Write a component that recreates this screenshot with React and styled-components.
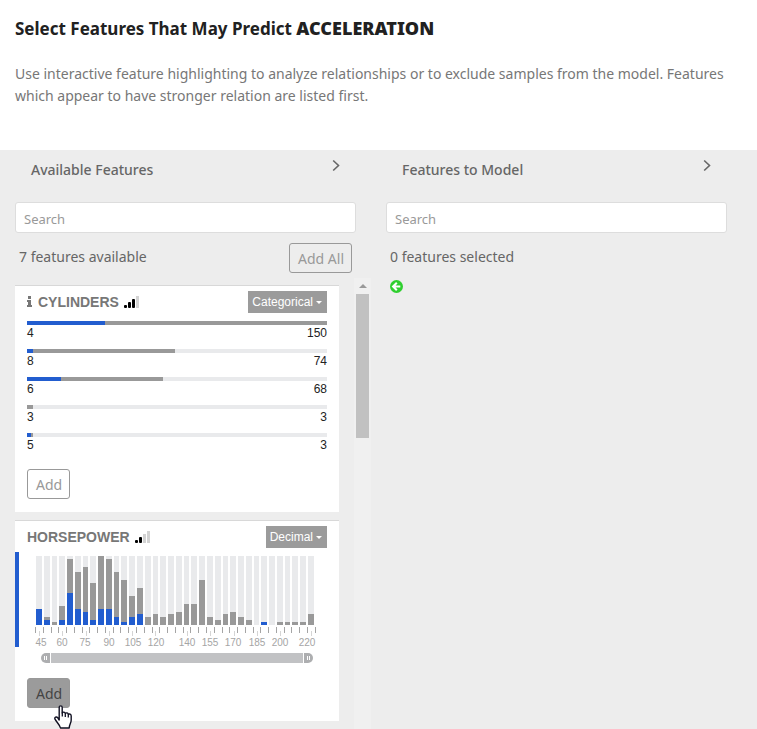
import React, { useState } from "react";
import styled, { createGlobalStyle, css } from "styled-components";

const GlobalStyle = createGlobalStyle`
  * { box-sizing: border-box; }
  html, body, #root { height: 100%; }
  body { margin: 0; background: #fff; color: #666; font-family: "Noto Sans", "Open Sans", sans-serif; overflow: hidden; }
`;

const Page = styled.div`
  display: flex;
  flex-direction: column;
  height: 100vh;
`;

const Intro = styled.header`
  padding: 16px 15px 0;
  height: 150px;
  flex: none;
`;

const Title = styled.h1`
  margin: 0;
  font-size: 17px;
  line-height: 24px;
  font-weight: 700;
  color: #212121;
  strong { font-size: 18px; font-weight: 900; }
`;

const Lead = styled.p`
  margin: 22px 0 0;
  font-size: 14px;
  line-height: 22px;
  font-weight: 400;
  color: #777;
`;

const Columns = styled.main`
  flex: 1;
  min-height: 0;
  display: grid;
  grid-template-columns: 1fr 1fr;
  padding-right: 15px;
  background: #ededed;
`;

const Column = styled.section`
  display: flex;
  flex-direction: column;
  min-width: 0;
  min-height: 0;
  padding-left: 15px;
`;

const ColumnHead = styled.div`
  display: flex;
  justify-content: space-between;
  align-items: flex-start;
  height: 52px;
  padding: 8px 31px 0 16px;
`;

const ColumnTitle = styled.h2`
  margin: 0;
  font-size: 14px;
  line-height: 24px;
  font-weight: 500;
  color: #666;
`;

const Collapse = styled.button`
  display: flex;
  padding: 1px 0;
  border: 0;
  background: none;
`;

const Search = styled.input`
  margin-right: 15px;
  height: 31px;
  padding: 3px 8px 0;
  border: 1px solid #ddd;
  border-radius: 3px;
  background: #fff;
  font: 400 13px "Noto Sans", sans-serif;
  &::placeholder { color: #999; opacity: 1; }
`;

const Summary = styled.div`
  display: flex;
  justify-content: space-between;
  align-items: flex-start;
  height: 45px;
  padding: 10px 19px 0 4px;
  font-size: 14px;
  line-height: 28px;
`;

const Button = styled.button`
  height: 30px;
  padding: 2px 7px 0 8px;
  border: 1px solid #999;
  border-radius: 3px;
  background: ${(p) => (p.$active ? "#9b9b9b" : "transparent")};
  color: ${(p) => (p.$active ? "#444" : "#999")};
  font: 400 14px/24px "Noto Sans", sans-serif;
`;

const ScrollArea = styled.div`
  flex: 1;
  min-height: 0;
  display: flex;
  overflow: hidden;
`;

const Cards = styled.div`
  flex: 1;
  min-width: 0;
  display: flex;
  flex-direction: column;
  gap: 8px;
  padding: 7px 15px 8px 0;
`;

const Scrollbar = styled.div`
  width: 17px;
  padding: 0 2px;
  background: #f0f0f0;
`;

const ScrollUp = styled.div`
  height: 16px;
  display: flex;
  align-items: center;
  justify-content: center;
  &::after {
    content: "";
    border: 4px solid transparent;
    border-top: 0;
    border-bottom-color: #999;
  }
`;

const ScrollThumb = styled.div`
  height: 144px;
  background: #c1c1c1;
`;

const Card = styled.article`
  flex: none;
  padding: 5px 12px 13px;
  border-top: 1px solid #d8d8d8;
  background: #fff;
  font-family: "Liberation Sans", Arial, sans-serif;
`;

const CardHead = styled.div`
  display: flex;
  align-items: center;
  height: 22px;
  gap: 5px;
`;

const FeatureName = styled.h3`
  margin: 0;
  font-size: 14px;
  line-height: 22px;
  font-weight: 700;
  color: #777;
`;

const TypePicker = styled.span`
  position: relative;
  margin-left: auto;
  &::after {
    content: "";
    position: absolute;
    right: 5px;
    top: 10px;
    border: 3px solid transparent;
    border-bottom: 0;
    border-top-color: #fff;
    pointer-events: none;
  }
`;

const TypeSelect = styled.select`
  display: block;
  appearance: none;
  height: 22px;
  padding: 0 14px 0 4px;
  border: 0;
  border-radius: 0;
  background: #9b9b9b;
  color: #fff;
  field-sizing: content;
  font: 400 12px "Liberation Sans", Arial, sans-serif;
`;

const Categories = styled.ul`
  list-style: none;
  margin: 8px 0;
  padding: 0;
`;

const Category = styled.li`
  height: 28px;
  color: #222;
  font-size: 12px;
  line-height: 16px;
`;

const CategoryBar = styled.div`
  display: flex;
  height: 4px;
  background: #e9eaec;
`;

const Portion = styled.span`
  background: ${(p) => (p.$selected ? "#225dcf" : "#999")};
`;

const CategoryText = styled.div`
  display: flex;
  justify-content: space-between;
`;

const Histogram = styled.div`
  margin: 4px -12px 6px;
  padding: 4px 12px 0 8px;
  border-left: 4px solid #225dcf;
  svg { display: block; width: 100%; height: auto; }
  text { font: 400 10px "Liberation Sans", Arial, sans-serif; fill: #a5a5a5; text-anchor: middle; }
`;

const Range = styled.div`
  position: relative;
  height: 10px;
  margin: 0 14px 15px;
  background: linear-gradient(#c1c2c4, #c1c2c4) center / calc(100% - 20px) 100% no-repeat;
`;

const thumb = css`
  appearance: none;
  width: 9px;
  height: 10px;
  border: 0;
  pointer-events: auto;
  background:
    linear-gradient(#fff, #fff) 3px 3px / 1px 4px no-repeat,
    linear-gradient(#fff, #fff) 5px 3px / 1px 4px no-repeat,
    #adaeb0;
  border-radius: ${(p) => (p.$end ? "0 5px 5px 0" : "5px 0 0 5px")};
`;

const RangeInput = styled.input`
  position: absolute;
  inset: 0;
  width: 100%;
  height: 10px;
  margin: 0;
  appearance: none;
  background: none;
  pointer-events: none;
  &::-webkit-slider-thumb { ${thumb} }
`;

const Action = styled.div`
  position: relative;
  display: flex;
`;

const Pointer = styled.svg`
  position: absolute;
  left: 27px;
  top: 27px;
`;

const MoveBack = styled.button`
  align-self: flex-start;
  display: flex;
  margin: 2px 0 0 4px;
  padding: 0;
  border: 0;
  background: none;
`;

const TOTALS = [16, 8, 3, 19, 66, 53, 58, 42, 69, 66, 53, 45, 29, 37, 8, 11, 8, 11, 13, 21, 21, 45, 8, 5, 11, 13, 8, 5, 0, 3, 0, 3, 3, 3, 3, 11];
const SELECTED = { 0: 16, 1: 5, 3: 5, 4: 32, 5: 16, 6: 13, 7: 5, 8: 16, 9: 16, 10: 8, 11: 3, 12: 8, 13: 11, 29: 3 };
const LABELS = [[45, 14, 12], [60, 35, 35], [75, 58, 59], [90, 82, 82], [105, 106, 105], [120, 129, 128], [140, 160, 160], [155, 183, 183], [170, 206, 207], [185, 230, 230], [200, 253, 253], [220, 280, 284]];
const CATEGORIES = [
  { name: 4, count: 150, total: 300, selected: 78 },
  { name: 8, count: 74, total: 148, selected: 6 },
  { name: 6, count: 68, total: 136, selected: 34 },
  { name: 3, count: 3, total: 6, selected: 0 },
  { name: 5, count: 3, total: 6, selected: 4 },
];
const binX = (i) => Math.round((i * 272) / 35) + 9;

function Signal({ level }) {
  const bars = [[0, 9, 3, 3], [4, 6, 3, 6], [8, 3, 3, 9], [12, 0, 3, 12]];
  return (
    <svg width="15" height="12" viewBox="0 0 15 12" aria-hidden="true">
      {bars.map(([x, y, w, h], i) => (
        <rect key={x} x={x} y={y} width={w} height={h} rx={i < level ? 1 : 0} fill={i < level ? "#000" : "#d3d3d3"} />
      ))}
    </svg>
  );
}

function InfoIcon() {
  return (
    <svg width="6" height="12" viewBox="0 0 6 12" aria-hidden="true" fill="#777">
      <path d="M1 0h3v3H1zM0 4h4v5h1v2H0V9h1V6H0z" />
    </svg>
  );
}

function Chevron() {
  return (
    <svg width="8" height="13" viewBox="0 0 8 13" fill="none" stroke="#666" strokeWidth="1.6" aria-hidden="true">
      <path d="M1.2 1.5L6.5 6.5L1.2 11.5" />
    </svg>
  );
}

function FeatureType({ value, options }) {
  return (
    <TypePicker>
      <TypeSelect aria-label="Feature type" defaultValue={value}>
        {options.map((o) => <option key={o}>{o}</option>)}
      </TypeSelect>
    </TypePicker>
  );
}

function HorsepowerChart() {
  return (
    <svg viewBox="0 0 300 91" role="img" aria-label="Horsepower distribution" shapeRendering="crispEdges">
      {TOTALS.map((total, i) => {
        const x = binX(i);
        const w = binX(i + 1) - x - 2;
        const chosen = SELECTED[i] || 0;
        return (
          <g key={i}>
            <rect x={x} y="0" width={w} height="69" fill="#e9eaec" />
            <rect x={x} y={69 - total} width={w} height={total} fill="#999" />
            <rect x={x} y={69 - chosen} width={w} height={chosen} fill="#225dcf" />
          </g>
        );
      })}
      {Array.from({ length: 37 }, (_, i) => (
        <rect key={i} x={binX(i) - 1} y="71" width="1" height="6" fill="#a5a5a5" />
      ))}
      {LABELS.map(([label, x, tick]) => (
        <g key={label}>
          <rect x={tick} y="75" width="1" height="5" fill="#d5d5d5" />
          <text x={x} y="90">{label}</text>
        </g>
      ))}
    </svg>
  );
}

function SearchColumn({ title, summary, children }) {
  return (
    <Column>
      <ColumnHead>
        <ColumnTitle>{title}</ColumnTitle>
        <Collapse type="button" aria-label={`Collapse ${title}`}><Chevron /></Collapse>
      </ColumnHead>
      <Search type="search" placeholder="Search" aria-label={`Search ${title}`} />
      <Summary>{summary}</Summary>
      {children}
    </Column>
  );
}

export default function App() {
  const [range, setRange] = useState([0, 100]);
  return (
    <>
      <GlobalStyle />
      <Page>
        <Intro>
          <Title>Select Features That May Predict <strong>ACCELERATION</strong></Title>
          <Lead>
            Use interactive feature highlighting to analyze relationships or to exclude samples from the model. Features
            which appear to have stronger relation are listed first.
          </Lead>
        </Intro>
        <Columns>
          <SearchColumn
            title="Available Features"
            summary={<><span>7 features available</span><Button type="button">Add All</Button></>}
          >
            <ScrollArea>
              <Cards>
                <Card>
                  <CardHead>
                    <InfoIcon />
                    <FeatureName>CYLINDERS</FeatureName>
                    <Signal level={3} />
                    <FeatureType value="Categorical" options={["Categorical", "Decimal"]} />
                  </CardHead>
                  <Categories>
                    {CATEGORIES.map((c) => (
                      <Category key={c.name}>
                        <CategoryBar>
                          <Portion $selected style={{ width: `${c.selected / 3}%` }} />
                          <Portion style={{ width: `${(c.total - c.selected) / 3}%` }} />
                        </CategoryBar>
                        <CategoryText><span>{c.name}</span><span>{c.count}</span></CategoryText>
                      </Category>
                    ))}
                  </Categories>
                  <Action><Button type="button">Add</Button></Action>
                </Card>
                <Card>
                  <CardHead>
                    <FeatureName>HORSEPOWER</FeatureName>
                    <Signal level={2} />
                    <FeatureType value="Decimal" options={["Categorical", "Decimal"]} />
                  </CardHead>
                  <Histogram><HorsepowerChart /></Histogram>
                  <Range>
                    <RangeInput type="range" aria-label="Minimum horsepower" value={range[0]}
                      onChange={(e) => setRange([Math.min(+e.target.value, range[1]), range[1]])} />
                    <RangeInput $end type="range" aria-label="Maximum horsepower" value={range[1]}
                      onChange={(e) => setRange([range[0], Math.max(+e.target.value, range[0])])} />
                  </Range>
                  <Action>
                    <Button type="button" $active>Add</Button>
                    <Pointer width="18" height="24" viewBox="0 0 18 24" aria-hidden="true">
                      <path
                        d="M5.2 15V2.5C5.2.3 8.2.3 8.2 2.5V8C9 6.6 11.2 7 11.3 8.5C12.2 7.3 14.2 7.9 14.3 9.4C15.4 8.5 17.2 9.2 17.2 11V15C17.2 18 15.5 19 15.2 23H6.5C6 20 2.5 17 1 14.2C.2 12.2 2.4 11.2 3.8 12.8Z"
                        fill="#fff" stroke="#111122" strokeWidth="1.4" strokeLinejoin="round"
                      />
                      <path d="M8.3 7.5V11.5M11.3 8.5V12M14.3 9.5V12.5" stroke="#111122" strokeWidth="1.3" />
                    </Pointer>
                  </Action>
                </Card>
              </Cards>
              <Scrollbar aria-hidden="true"><ScrollUp /><ScrollThumb /></Scrollbar>
            </ScrollArea>
          </SearchColumn>
          <SearchColumn title="Features to Model" summary={<span>0 features selected</span>}>
            <MoveBack type="button" aria-label="Move features back">
              <svg width="13" height="13" viewBox="0 0 13 13" aria-hidden="true">
                <circle cx="6.5" cy="6.5" r="6.5" fill="#2fcf2f" />
                <path d="M6.8 2.8L3.1 6.5L6.8 10.2M3.6 6.5H10.3" fill="none" stroke="#fff" strokeWidth="2.1" />
              </svg>
            </MoveBack>
          </SearchColumn>
        </Columns>
      </Page>
    </>
  );
}
